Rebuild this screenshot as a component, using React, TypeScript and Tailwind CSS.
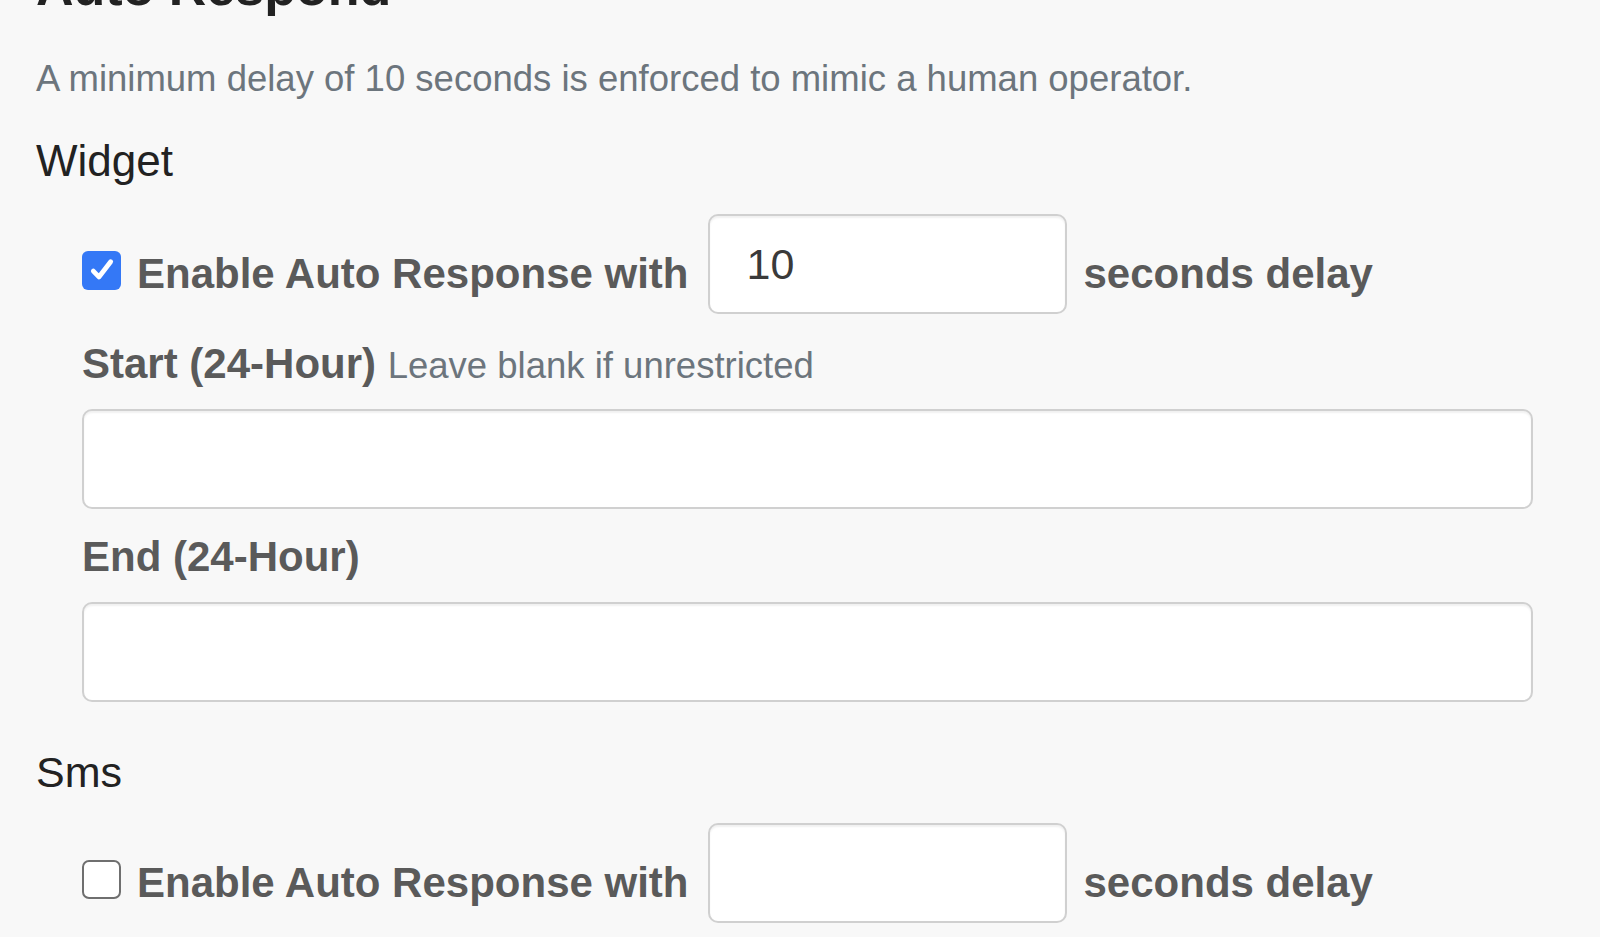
import React from "react";

function CheckBox({ checked }: { checked: boolean }) {
  if (checked) {
    return (
      <span className="mt-[12px] flex h-[39px] w-[39px] shrink-0 items-center justify-center rounded-[6px] bg-[#3478f6]">
        <svg width="32" height="32" viewBox="0 0 24 24" fill="none">
          <path d="M5.5 12.8l4.2 4.4L18.5 5.8" stroke="white" strokeWidth="3.6" strokeLinecap="round" strokeLinejoin="round" />
        </svg>
      </span>
    );
  }
  return <span className="mt-[12px] block h-[39px] w-[39px] shrink-0 rounded-[7px] border-[2.5px] border-[#6f6f6f] bg-white" />;
}

function AutoRow({ checked, value }: { checked: boolean; value: string }) {
  return (
    <div className="flex h-[100px] items-center pl-[46px]">
      <CheckBox checked={checked} />
      <span className="ml-[16px] mt-[20px] whitespace-nowrap text-[42px] font-bold leading-[50px] text-[#5a5a5a]">
        Enable Auto Response with
      </span>
      <div className="ml-[19px] flex h-[100px] w-[359px] items-center rounded-[10px] border-2 border-[#d0d0d0] bg-white pl-[37px] text-[43px] leading-[50px] text-[#3a3a3a] shadow-[inset_0_2px_2px_rgba(0,0,0,0.06)]">
        {value}
      </div>
      <span className="ml-[17px] mt-[20px] whitespace-nowrap text-[42px] font-bold leading-[50px] text-[#5a5a5a]">
        seconds delay
      </span>
    </div>
  );
}

function WideInput() {
  return (
    <div className="ml-[46px] h-[100px] rounded-[10px] border-2 border-[#d0d0d0] bg-white shadow-[inset_0_2px_2px_rgba(0,0,0,0.06)]" />
  );
}

export default function App() {
  return (
    <div
      className="h-[937px] overflow-hidden bg-[#f8f8f8] pl-[36px] pr-[67px]"
      style={{ fontFamily: '"Liberation Sans", Arial, Helvetica, sans-serif' }}
    >
      <h4 className="mt-[-44px] text-[52px] font-bold leading-[62px] text-[#222]">Auto Respond</h4>
      <p className="mt-[39px] text-[36.5px] leading-[44px] text-[#6c757d]">
        A minimum delay of 10 seconds is enforced to mimic a human operator.
      </p>
      <h6 className="mt-[35px] text-[44px] font-medium leading-[50px] text-[#222]">Widget</h6>
      <div className="mt-[28px]">
        <AutoRow checked={true} value="10" />
      </div>
      <div className="mt-[25px] flex h-[50px] items-baseline pl-[46px]">
        <span className="whitespace-pre text-[42px] font-bold leading-[50px] text-[#5a5a5a]">Start (24-Hour) </span>
        <span className="text-[36.5px] leading-[50px] text-[#6c757d]">Leave blank if unrestricted</span>
      </div>
      <div className="mt-[20px]">
        <WideInput />
      </div>
      <div className="mt-[23px] flex h-[50px] items-baseline pl-[46px]">
        <span className="text-[42px] font-bold leading-[50px] text-[#5a5a5a]">End (24-Hour)</span>
      </div>
      <div className="mt-[20px]">
        <WideInput />
      </div>
      <h6 className="mt-[45px] text-[43px] font-medium leading-[50px] text-[#222]">Sms</h6>
      <div className="mt-[26px]">
        <AutoRow checked={false} value="" />
      </div>
    </div>
  );
}
